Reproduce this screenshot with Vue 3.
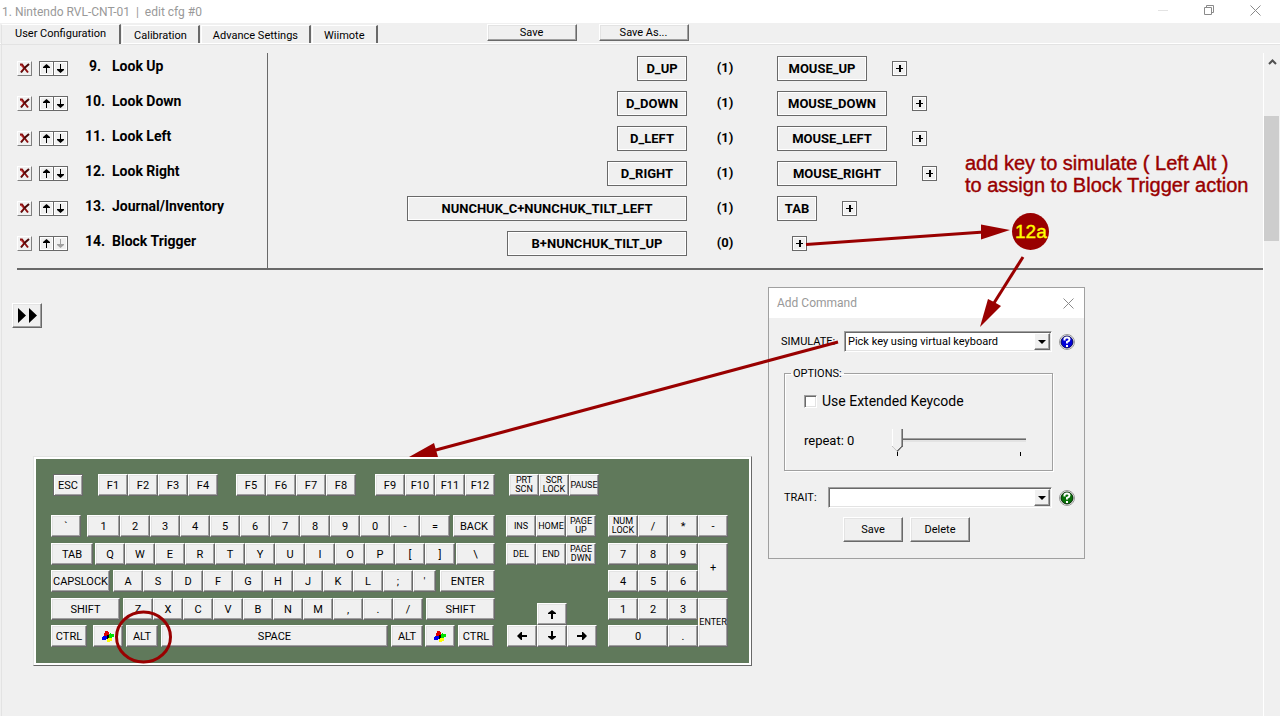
<script setup>
import { ref } from 'vue'

const tabs = ['User Configuration', 'Calibration', 'Advance Settings', 'Wiimote']
const activeTab = ref(0)

const rows = [
  { n: 9, name: 'Look Up', input: 'D_UP', inW: 50, count: 1, out: 'MOUSE_UP', outW: 90 },
  { n: 10, name: 'Look Down', input: 'D_DOWN', inW: 70, count: 1, out: 'MOUSE_DOWN', outW: 110 },
  { n: 11, name: 'Look Left', input: 'D_LEFT', inW: 70, count: 1, out: 'MOUSE_LEFT', outW: 110 },
  { n: 12, name: 'Look Right', input: 'D_RIGHT', inW: 80, count: 1, out: 'MOUSE_RIGHT', outW: 120 },
  { n: 13, name: 'Journal/Inventory', input: 'NUNCHUK_C+NUNCHUK_TILT_LEFT', inW: 280, count: 1, out: 'TAB', outW: 40 },
  { n: 14, name: 'Block Trigger', input: 'B+NUNCHUK_TILT_UP', inW: 180, count: 0, out: '', outW: 0 },
]

/* A key is [label, width, gap before]. */
const run = (labels) => labels.map((l) => [l, 30, 0])
const mainRows = [
  [['ESC', 30, 2], ['F1', 30, 15], ...run(['F2', 'F3', 'F4']), ['F5', 30, 18], ...run(['F6', 'F7', 'F8']), ['F9', 30, 19], ...run(['F10', 'F11', 'F12'])],
  [['`', 30, 0], ['1', 33, 6], ...run(['2', '3', '4', '5', '6', '7', '8', '9', '0', '-', '=']), ['BACK', 42, 3]],
  [['TAB', 42, 0], ['Q', 30, 2], ...run(['W', 'E', 'R', 'T', 'Y', 'U', 'I', 'O', 'P', '[', ']']), ['\\', 39, 1]],
  [['CAPSLOCK', 59, 0], ['A', 30, 3], ...run(['S', 'D', 'F', 'G', 'H', 'J', 'K', 'L', ';']), ["'", 23, 0], ['ENTER', 55, 4]],
  [['SHIFT', 69, 0], ['Z', 30, 3], ...run(['X', 'C', 'V', 'B', 'N', 'M', ',', '.', '/']), ['SHIFT', 69, 3]],
  [['CTRL', 36, 0], ['win', 30, 6], ['ALT', 32, 3], ['SPACE', 227, 3], ['ALT', 32, 3], ['win', 30, 2], ['CTRL', 36, 3]],
]
const navRows = [
  [['PRT SCN', 30, 3], ['SCR LOCK', 30, 0], ['PAUSE', 30, 0]],
  [['INS', 30, 0], ['HOME', 30, 0], ['PAGE UP', 30, 0]],
  [['DEL', 30, 0], ['END', 30, 0], ['PAGE DWN', 30, 0]],
  [],
  [],
  [['left', 30, 1], ['down', 30, 0], ['right', 30, 0]],
]
const numpad = [
  ['NUM LOCK', 'r2 small'], ['/', 'r2'], ['*', 'r2'], ['-', 'r2'],
  ['7', 'r3'], ['8', 'r3'], ['9', 'r3'], ['+', 'r3 tall'],
  ['4', 'r4'], ['5', 'r4'], ['6', 'r4'],
  ['1', 'r5'], ['2', 'r5'], ['3', 'r5'], ['ENTER', 'r5 tall small'],
  ['0', 'r6 wide'], ['.', 'r6'],
]
const arrows = {
  left: 'M0 5L4 1H5V4H10V6H5V9H4Z',
  right: 'M10 5L6 1H5V4H0V6H5V9H6Z',
  up: 'M5 0L9 3V4H6V9H4V4H1V3Z',
  down: 'M5 9L1 6V5H4V0H6V5H9V6Z',
}
const simulate = ref('Pick key using virtual keyboard')
const trait = ref('')
const extended = ref(false)
const repeat = ref(0)
</script>

<template>
  <div class="app">
    <header class="titlebar">
      <h1>1. Nintendo RVL-CNT-01&nbsp; |&nbsp; edit cfg #0</h1>
      <div class="winctl">
        <button type="button" aria-label="Minimize"><svg width="11" height="11"><path d="M0 5.500H10" stroke="#e3e3e3" /></svg></button>
        <button type="button" aria-label="Restore"><svg width="11" height="11" fill="none" stroke="#8a8a8a"><path d="M.5 2.500H7.500V9.500H.5ZM2.500 2.500V.5H9.500V7.500H7.500" /></svg></button>
        <button type="button" aria-label="Close"><svg width="11" height="11"><path d="M.5.5L10.500 10.500M10.500.5L.5 10.500" stroke="#8a8a8a" /></svg></button>
      </div>
    </header>

    <nav class="toolbar">
      <div class="tabs" role="tablist">
        <button
          v-for="(t, i) in tabs" :key="t" type="button" role="tab" class="tab"
          :class="{ active: i === activeTab }" :aria-selected="i === activeTab" @click="activeTab = i"
        >{{ t }}</button>
      </div>
      <div class="actions">
        <button type="button" class="raised save">Save</button>
        <button type="button" class="raised save">Save As...</button>
      </div>
    </nav>

    <div class="workspace">
      <main class="content">
        <section class="list">
          <div v-for="r in rows" :key="r.n" class="row">
            <div class="action">
              <button type="button" class="del" :aria-label="'Delete ' + r.name">
                <svg width="11" height="11" viewBox="0 0 11 11" fill="none">
                  <path d="M1 1.500H3L5.500 5L9 9.500" stroke="#8e1010" stroke-width="2" />
                  <path d="M10 1L5.500 5L2 9.500" stroke="#4a0808" stroke-width="2" />
                  <path d="M1.500 2L5 5.500M4 6L2 8.500" stroke="#c41a1a" />
                </svg>
              </button>
              <div class="move">
                <button type="button" aria-label="Move up"><svg width="7" height="9" viewBox="0 0 7 9"><path d="M3.500 0L7 3V4H4V9H3V4H0V3Z" /></svg></button>
                <button type="button" aria-label="Move down" :disabled="r.n === 14"><svg width="7" height="9" viewBox="0 0 7 9"><path d="M3.500 9L0 6V5H3V0H4V5H7V6Z" /></svg></button>
              </div>
              <span class="num">{{ r.n }}.</span>
              <span class="name">{{ r.name }}</span>
            </div>
            <div class="input">
              <button type="button" class="box" :style="{ width: r.inW + 'px' }">{{ r.input }}</button>
            </div>
            <span class="count">({{ r.count }})</span>
            <div class="output">
              <button v-if="r.out" type="button" class="box" :style="{ width: r.outW + 'px' }">{{ r.out }}</button>
              <button type="button" class="plus" aria-label="Add command"><svg width="7" height="7"><path d="M3 0H5V3H7V4H5V7H3V4H0V3H3Z" /></svg></button>
            </div>
          </div>
        </section>

        <button type="button" class="raised forward" aria-label="Next">
          <svg width="20" height="15"><path d="M1 0L9 7.500L1 15ZM12 0L20 7.500L12 15Z" /></svg>
        </button>

        <section class="keyboard" aria-label="Virtual keyboard">
          <div class="block main-block">
            <div v-for="(row, i) in mainRows" :key="i" class="keys">
              <button
                v-for="(k, j) in row" :key="j" type="button" class="key" :class="{ focused: k[0] === 'ESC' }"
                :style="{ width: k[1] + 'px', marginLeft: k[2] + 'px' }" :aria-label="k[0]"
              >
                <svg v-if="k[0] === 'win'" width="12" height="12">
                  <path d="M5 3H7V9H5Z" />
                  <path d="M3 0H6V1H7V4H5V5H2V2H3Z" fill="#e00000" /><path d="M7 3H8V2H9V3H12V6H10V7H7Z" fill="#00e000" />
                  <path d="M1 5H5V8H4V9H0V6H1Z" fill="#0000f0" /><path d="M6 7H10V10H8V11H5V8H6Z" fill="#ffff00" />
                </svg>
                <template v-else>{{ k[0] }}</template>
              </button>
            </div>
          </div>
          <div class="block nav-block">
            <div v-for="(row, i) in navRows" :key="i" class="keys">
              <button v-if="i === 4" type="button" class="key up" aria-label="up"><svg width="10" height="10"><path :d="arrows.up" /></svg></button>
              <button
                v-for="k in row" :key="k[0]" type="button" class="key small"
                :style="{ width: k[1] + 'px', marginLeft: k[2] + 'px' }" :aria-label="k[0]"
              >
                <svg v-if="arrows[k[0]]" width="10" height="10"><path :d="arrows[k[0]]" /></svg>
                <template v-else>{{ k[0] }}</template>
              </button>
            </div>
          </div>
          <div class="block numpad">
            <button v-for="k in numpad" :key="k[0]" type="button" class="key" :class="k[1]">{{ k[0] }}</button>
          </div>
        </section>
      </main>
      <div class="scrollbar" aria-hidden="true">
        <svg width="9" height="6"><path d="M1 5L4.500 1.500L8 5" fill="none" stroke="#505050" stroke-width="2" /></svg>
        <div class="thumb"></div>
      </div>
    </div>

    <form class="dialog" role="dialog" aria-labelledby="dlg-title" @submit.prevent>
      <header class="dlg-head">
        <h2 id="dlg-title">Add Command</h2>
        <button type="button" aria-label="Close"><svg width="11" height="11"><path d="M.5.5L10.500 10.500M10.500.5L.5 10.500" stroke="#8a8a8a" /></svg></button>
      </header>
      <div class="dlg-body">
        <div class="field">
          <label for="sim" class="sim-label">SIMULATE:</label>
          <div class="combo">
            <select id="sim" v-model="simulate"><option>Pick key using virtual keyboard</option></select>
            <span class="drop"><svg width="8" height="4"><path d="M0 0H8L4 4Z" /></svg></span>
          </div>
          <button type="button" class="help" aria-label="Help on simulate">
            <svg width="18" height="18" viewBox="0 0 18 18">
              <circle cx="9" cy="9" r="7.500" fill="#fff" stroke="#999" /><circle cx="9" cy="9" r="6" fill="#0000d8" stroke="#0a0a50" />
              <path d="M6.500 7.500V6Q6.500 4.500 9 4.500T11.500 6.500Q11.500 8 9 9V10.500M9 12V14" fill="none" stroke="#fff" stroke-width="2" />
            </svg>
          </button>
        </div>
        <fieldset>
          <legend>OPTIONS:</legend>
          <label class="check"><input v-model="extended" type="checkbox" />Use Extended Keycode</label>
          <div class="repeat">
            <label for="rep">repeat: {{ repeat }}</label>
            <div class="slider">
              <input id="rep" v-model="repeat" type="range" min="0" max="10" />
              <div class="ticks"><i></i><i></i></div>
            </div>
          </div>
        </fieldset>
        <div class="field">
          <label for="trait" class="trait-label">TRAIT:</label>
          <div class="combo">
            <select id="trait" v-model="trait"><option value=""></option></select>
            <span class="drop"><svg width="8" height="4"><path d="M0 0H8L4 4Z" /></svg></span>
          </div>
          <button type="button" class="help" aria-label="Help on trait">
            <svg width="18" height="18" viewBox="0 0 18 18">
              <circle cx="9" cy="9" r="7.500" fill="#fff" stroke="#999" /><circle cx="9" cy="9" r="6" fill="#087008" stroke="#052505" />
              <path d="M6.500 7.500V6Q6.500 4.500 9 4.500T11.500 6.500Q11.500 8 9 9V10.500M9 12V14" fill="none" stroke="#fff" stroke-width="2" />
            </svg>
          </button>
        </div>
        <div class="dlg-actions">
          <button type="submit" class="raised">Save</button>
          <button type="button" class="raised">Delete</button>
        </div>
      </div>
    </form>

    <svg class="notes" width="1280" height="716" viewBox="0 0 1280 716">
      <g fill="none" stroke="#900" stroke-width="3">
        <path d="M806 244.500L984 232" />
        <path d="M1023 257L994 303" />
        <path d="M838 342L434 450.500" />
        <ellipse cx="143.500" cy="637" rx="27" ry="25" />
      </g>
      <g fill="#900">
        <path d="M1010 230L981 224.500V239.500Z" />
        <path d="M980 327L988 299L994 302L1001 306Z" />
        <path d="M409 457L434 443L438 457Z" />
        <circle cx="1030.500" cy="231.500" r="18.500" />
        <g class="note-text">
          <text x="965" y="170">add key to simulate ( Left Alt )</text>
          <text x="965" y="192">to assign to Block Trigger action</text>
        </g>
      </g>
      <text class="badge" x="1015" y="238">12a</text>
    </svg>
  </div>
</template>

<style>
html, body { margin: 0; background: #f0f0f0; }
</style>

<style scoped>
.app {
  position: relative;
  display: flex;
  flex-direction: column;
  min-height: 100vh;
  overflow: hidden;
  background: #f0f0f0;
  color: #000;
  font: 11px/13px Roboto, "Liberation Sans", sans-serif;
}
button, select, input { font: inherit; color: inherit; margin: 0; padding: 0; border-radius: 0; }
button { display: flex; align-items: center; justify-content: center; border: 0; background: #f0f0f0; }
svg { display: block; flex: none; }
* { box-sizing: border-box; }

.titlebar { display: flex; align-items: center; justify-content: space-between; height: 23px; padding: 0 19px 2px 2px; background: #fff; }
h1, h2 { margin: 0; font-size: 12px; line-height: 16px; font-weight: 400; color: #999; }
h1 { padding-top: 2px; }
.winctl { display: flex; gap: 35px; }
.winctl button, .dlg-head button { background: none; }

.toolbar { display: flex; align-items: flex-start; height: 22px; padding: 1px 0 0 1px; box-shadow: inset 0 -1px #e3e3e3, inset 0 -2px #fff; }
.tabs { display: flex; align-items: flex-end; height: 21px; }
.tab { height: 18px; margin: 0 0 2px 1px; padding: 1px 11px 0; border: solid; border-width: 1px 2px 0 1px; border-color: #fff #696969 #fff #fff; }
.tab.active { height: 20px; margin: 0 0 1px; padding: 0 13px 2px; border-left-color: #e3e3e3; }
.actions { display: flex; gap: 22px; margin-left: 109px; }
.raised { border: 1px solid; border-color: #fff #696969 #696969 #fff; box-shadow: inset -1px -1px #a0a0a0, inset 1px 1px #e3e3e3; }
.save { width: 90px; height: 17px; }

.workspace { display: flex; flex: 1; border-left: 1px solid #e3e3e3; margin-left: 1px; }
.content { flex: 1; min-width: 0; padding-top: 8px; }
.list { margin-left: 15px; border-bottom: 2px solid #696969; }
.row { display: grid; grid-template-columns: 251px 419px 76px 1fr; height: 35px; }
.row > * { display: flex; align-items: center; padding-bottom: 4px; }
.row:last-child { height: 40px; }
.row:last-child > * { padding-bottom: 9px; }
.action { border-right: 1px solid #696969; font-size: 14px; font-weight: 700; }
.del { width: 15px; height: 15px; border: 1px solid; border-color: #fff #808080 #808080 #fff; }
.move { display: flex; margin-left: 7px; border: 1px solid #696969; }
.move button { width: 13px; height: 13px; box-shadow: inset 0 0 0 1px #fff; }
.move button + button { width: 14px; border-left: 1px solid #696969; }
.move button:disabled { fill: #a0a0a0; }
.num { width: 26px; margin: 0 4px 4px 14px; text-align: center; }
.name { margin-bottom: 4px; }
.input { justify-content: flex-end; }
.box { height: 25px; border: 1px solid #696969; box-shadow: inset 0 0 0 1px #fff; font-size: 13px; font-weight: 700; }
.count { justify-content: center; font-size: 13px; font-weight: 700; line-height: 13px; margin-bottom: 2px; }
.output { padding-left: 14px; }
.plus { width: 15px; height: 15px; margin-left: 15px; border: 1px solid #696969; box-shadow: inset 0 0 0 1px #fff; }
.box + .plus { margin-left: 25px; }

.forward { width: 30px; height: 25px; margin: 33px 0 0 10px; }

.keyboard {
  display: flex;
  width: 719px;
  margin: 128px 0 0 31px;
  padding: 17px 17px 18px;
  background: #60795b;
  border: 1px solid;
  border-color: #e3e3e3 #696969 #696969 #e3e3e3;
  box-shadow: inset 0 0 0 2px #fff;
}
.block { display: grid; grid-template-rows: 41px 28px 27px 28px 27px 22px; align-items: start; }
.main-block { width: 444px; }
.nav-block { width: 91px; margin-left: 11px; }
.keys { display: flex; }
.key {
  flex: none;
  width: 30px;
  height: 22px;
  padding-top: 1px;
  border: 1px solid;
  border-color: #fff #696969 #696969 #fff;
  box-shadow: inset -1px -1px #a0a0a0, inset 1px 1px #e3e3e3;
  line-height: 12px;
  text-align: center;
  white-space: nowrap;
}
.key.focused { border-color: #696969; box-shadow: inset 1px 1px #fff, inset -1px -1px #a0a0a0; }
.key.small { padding: 0; font-size: 9px; line-height: 9px; white-space: normal; }
.key.up { margin: 5px 0 0 31px; }
.numpad { grid-template-columns: repeat(4, 30px); margin-left: 11px; }
.numpad .r2 { grid-row: 2; }
.numpad .r3 { grid-row: 3; }
.numpad .r4 { grid-row: 4; }
.numpad .r5 { grid-row: 5; }
.numpad .r6 { grid-row: 6; }
.numpad .tall { grid-row-end: span 2; grid-column: 4; height: 49px; }
.numpad .wide { grid-column: 1 / span 2; width: 60px; }

.scrollbar { display: flex; flex-direction: column; align-items: center; width: 17px; margin-top: 8px; border-left: 1px solid #fff; }
.scrollbar svg { margin-top: 6px; }
.thumb { width: 15px; height: 125px; margin: 51px 1px 0 0; background: #cdcdcd; }

.dialog { position: absolute; left: 768px; top: 287px; width: 317px; background: #f0f0f0; border: 1px solid #a0a0a0; }
.dlg-head { display: flex; align-items: center; justify-content: space-between; height: 30px; padding: 0 10px 0 8px; background: #fff; }
.dlg-body { padding: 13px 8px 16px 12px; }
.field { display: flex; align-items: center; height: 21px; }
.sim-label { width: 63px; }
.trait-label { width: 44px; margin-left: 3px; }
.combo { position: relative; flex: 1; }
select {
  display: block;
  width: 100%;
  height: 21px;
  padding: 0 18px 0 3px;
  appearance: none;
  background: #fff;
  border: 1px solid;
  border-color: #a0a0a0 #fff #fff #a0a0a0;
  box-shadow: inset 1px 1px #696969, inset -1px -1px #e3e3e3;
}
.drop {
  position: absolute;
  right: 2px;
  top: 2px;
  display: grid;
  place-items: center;
  width: 16px;
  height: 17px;
  background: #f0f0f0;
  border: 1px solid;
  border-color: #fff #696969 #696969 #fff;
  box-shadow: inset -1px -1px #a0a0a0;
  pointer-events: none;
}
.help { width: 18px; height: 18px; margin-left: 6px; background: none; }
fieldset { margin: 15px 23px 16px 3px; padding: 12px 19px 14px; border: 1px solid #a0a0a0; box-shadow: 1px 1px #fff, inset 1px 1px #fff; min-width: 0; }
legend { margin-left: -13px; padding: 0 2px; }
.check { display: flex; align-items: center; gap: 5px; font-size: 14px; line-height: 18px; }
.check input {
  width: 13px;
  height: 13px;
  appearance: none;
  background: #fff;
  border: 1px solid;
  border-color: #a0a0a0 #fff #fff #a0a0a0;
  box-shadow: inset 1px 1px #696969, inset -1px -1px #e3e3e3;
}
.repeat { display: flex; justify-content: space-between; margin-top: 19px; font-size: 13px; }
.repeat label { padding-top: 4px; line-height: 16px; }
.slider { width: 134px; margin-right: 7px; }
.slider input {
  display: block;
  width: 100%;
  height: 23px;
  appearance: none;
  background: linear-gradient(#a0a0a0 1px, #696969 1px, #696969 2px, #e3e3e3 2px) 100% 9px / 124px 4px no-repeat;
}
.slider input::-webkit-slider-thumb {
  appearance: none;
  width: 11px;
  height: 23px;
  background:
    linear-gradient(90deg, #fff 1px, #f0f0f0 1px, #f0f0f0 9px, #a0a0a0 9px, #a0a0a0 10px, #696969 10px) 0 0 / 11px 17px no-repeat,
    linear-gradient(135deg, #f0f0f0 38%, #696969 38%) 5px 17px / 6px 6px no-repeat,
    linear-gradient(225deg, #f0f0f0 38%, #c0c0c0 38%) 0 17px / 5px 6px no-repeat;
  clip-path: polygon(0 0, 100% 0, 100% 75%, 50% 100%, 0 75%);
}
.ticks { display: flex; justify-content: space-between; padding: 0 5px; }
.ticks i { width: 1px; height: 4px; background: #000; }
.dlg-actions { display: flex; gap: 7px; margin: 9px 0 0 62px; }
.dlg-actions button { width: 60px; height: 25px; }

.notes { position: absolute; left: 0; top: 0; pointer-events: none; }
.note-text { font: 20px "Liberation Sans", sans-serif; stroke: #900; stroke-width: 0.4px; }
.badge { font: 19px "Liberation Sans", sans-serif; fill: #ff0; stroke: #ff0; stroke-width: 0.4px; }
</style>
